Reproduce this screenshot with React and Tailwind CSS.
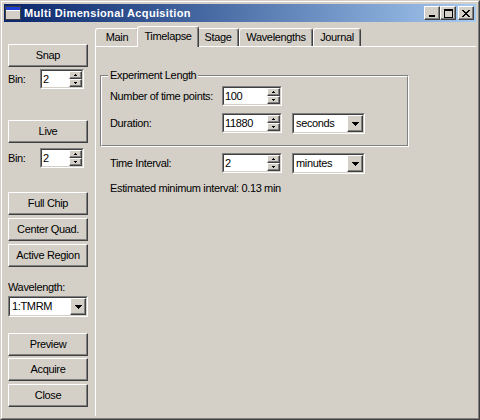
import React from "react";

const raised =
  "border border-t-white border-l-white border-r-[#404040] border-b-[#404040] shadow-[inset_-1px_-1px_0_#808080] bg-[#d4d0c8]";

function SmallUp() {
  return (
    <svg width="3" height="2" viewBox="0 0 3 2" shapeRendering="crispEdges">
      <rect x="1" y="0" width="1" height="1" fill="#000" />
      <rect x="0" y="1" width="3" height="1" fill="#000" />
    </svg>
  );
}

function SmallDown() {
  return (
    <svg width="3" height="2" viewBox="0 0 3 2" shapeRendering="crispEdges">
      <rect x="0" y="0" width="3" height="1" fill="#000" />
      <rect x="1" y="1" width="1" height="1" fill="#000" />
    </svg>
  );
}

function DownArrow() {
  return (
    <svg width="7" height="4" viewBox="0 0 7 4" shapeRendering="crispEdges">
      <rect x="0" y="0" width="7" height="1" fill="#000" />
      <rect x="1" y="1" width="5" height="1" fill="#000" />
      <rect x="2" y="2" width="3" height="1" fill="#000" />
      <rect x="3" y="3" width="1" height="1" fill="#000" />
    </svg>
  );
}

function Spin({ value, w }) {
  return (
    <div className={`${w} h-[20px] border border-t-[#808080] border-l-[#808080] border-r-white border-b-white`}>
      <div className="h-full flex border border-t-[#404040] border-l-[#404040] border-r-[#d4d0c8] border-b-[#d4d0c8] bg-white">
        <div className="flex-1 pl-[1px] flex items-center">{value}</div>
        <div className="w-[13px] flex flex-col">
          <div className={`h-[8px] ${raised} flex items-center justify-center`}>
            <SmallUp />
          </div>
          <div className={`h-[8px] ${raised} flex items-center justify-center`}>
            <SmallDown />
          </div>
        </div>
      </div>
    </div>
  );
}

function Select({ value, w, extra }) {
  return (
    <div className={`${w} ${extra} h-[21px] border border-t-[#808080] border-l-[#808080] border-r-white border-b-white`}>
      <div className="h-full flex border border-t-[#404040] border-l-[#404040] border-r-[#d4d0c8] border-b-[#d4d0c8] bg-white">
        <div className="flex-1 pl-[2px] flex items-center">{value}</div>
        <div className={`w-[16px] ${raised} flex items-center justify-center`}>
          <DownArrow />
        </div>
      </div>
    </div>
  );
}

function Btn({ children, extra }) {
  return (
    <div className={`h-[23px] ${raised} ${extra} flex items-center justify-center`}>
      {children}
    </div>
  );
}

function CloseIcon() {
  const rects = [];
  for (let i = 0; i < 7; i++) {
    rects.push(<rect key={"a" + i} x={i} y={i} width="2" height="1" fill="#000" />);
    rects.push(<rect key={"b" + i} x={6 - i} y={i} width="2" height="1" fill="#000" />);
  }
  return (
    <svg width="8" height="7" viewBox="0 0 8 7" shapeRendering="crispEdges">
      {rects}
    </svg>
  );
}

function TitleBar() {
  return (
    <div className="h-[18px] shrink-0 flex items-center bg-linear-to-r from-[#0a246a] to-[#a6caf0] pl-[1px] pr-[2px]">
      <svg width="16" height="14" viewBox="0 0 16 14" shapeRendering="crispEdges">
        <rect x="0" y="0" width="16" height="14" fill="#404040" />
        <rect x="1" y="1" width="14" height="12" fill="#d4d0c8" />
        <rect x="1" y="1" width="14" height="3" fill="#1c3fd8" />
        <rect x="1" y="4" width="14" height="1" fill="#ffffff" />
      </svg>
      <span className="ml-[3px] font-bold text-white tracking-[0.35px]">Multi Dimensional Acquisition</span>
      <div className="ml-auto flex items-center">
        <div className={`w-[16px] h-[14px] ${raised} flex items-end justify-center pb-[2px]`}>
          <svg width="6" height="2" viewBox="0 0 6 2" shapeRendering="crispEdges">
            <rect x="0" y="0" width="6" height="2" fill="#000" />
          </svg>
        </div>
        <div className={`w-[16px] h-[14px] ${raised} flex items-center justify-center`}>
          <svg width="9" height="9" viewBox="0 0 9 9" shapeRendering="crispEdges">
            <rect x="0" y="0" width="9" height="2" fill="#000" />
            <rect x="0" y="0" width="1" height="9" fill="#000" />
            <rect x="8" y="0" width="1" height="9" fill="#000" />
            <rect x="0" y="8" width="9" height="1" fill="#000" />
          </svg>
        </div>
        <div className={`ml-[2px] w-[16px] h-[14px] ${raised} flex items-center justify-center`}>
          <CloseIcon />
        </div>
      </div>
    </div>
  );
}

function LeftCol() {
  return (
    <div className="w-[80px] shrink-0 ml-[4px] pt-[22px] flex flex-col">
      <Btn>Snap</Btn>
      <div className="mt-[2px] h-[20px] flex items-center">
        <span className="w-[32px]">Bin:</span>
        <Spin value="2" w="w-[44px]" />
      </div>
      <Btn extra="mt-[31px]">Live</Btn>
      <div className="mt-[5px] h-[20px] flex items-center">
        <span className="w-[32px]">Bin:</span>
        <Spin value="2" w="w-[44px]" />
      </div>
      <Btn extra="mt-[24px]">Full Chip</Btn>
      <Btn extra="mt-[3px]">Center Quad.</Btn>
      <Btn extra="mt-[3px]">Active Region</Btn>
      <div className="mt-[14px] leading-[13px] h-[13px]">Wavelength:</div>
      <Select value="1:TMRM" w="w-[80px]" extra="mt-[2px]" />
      <Btn extra="mt-[16px]">Preview</Btn>
      <Btn extra="mt-[2px]">Acquire</Btn>
      <Btn extra="mt-[3px]">Close</Btn>
    </div>
  );
}

const tabBase =
  "border-t border-l border-r border-t-white border-l-white border-r-[#404040] rounded-t-[3px] shadow-[inset_-1px_0_0_#808080] bg-[#d4d0c8] flex items-center justify-center";

function RightCol() {
  return (
    <div className="ml-[7px] w-[400px] shrink-0 flex flex-col">
      <div className="h-[24px] shrink-0 flex items-end">
        <div className={`w-[44px] h-[18px] ${tabBase}`}>Main</div>
        <div className={`w-[62px] h-[21px] -mx-[2px] -mb-px relative z-10 pb-[2px] ${tabBase}`}>Timelapse</div>
        <div className={`w-[42px] h-[18px] ${tabBase}`}>Stage</div>
        <div className={`w-[74px] h-[18px] ${tabBase}`}>Wavelengths</div>
        <div className={`w-[48px] h-[18px] ${tabBase}`}>Journal</div>
      </div>
      <div className="flex-1 border-t border-l border-white">
        <div className="relative ml-[4px] mt-[28px] w-[309px] border border-t-[#808080] border-l-[#808080] border-r-white border-b-white">
          <div className="border border-t-white border-l-white border-r-[#808080] border-b-[#808080] pl-[8px] pt-[9px] pb-[11px]">
            <div className="h-[21px] flex items-start">
              <span className="w-[112px] h-[20px] flex items-center">Number of time points:</span>
              <Spin value="100" w="w-[60px]" />
            </div>
            <div className="mt-[6px] h-[21px] flex items-start">
              <span className="w-[112px] h-[20px] flex items-center">Duration:</span>
              <Spin value="11880" w="w-[60px]" />
              <Select value="seconds" w="w-[73px]" extra="ml-[10px]" />
            </div>
          </div>
          <span className="absolute left-[7px] top-[-7px] px-[2px] bg-[#d4d0c8] leading-[13px]">Experiment Length</span>
        </div>
        <div className="mt-[6px] pl-[14px] h-[21px] flex items-start">
          <span className="w-[112px] h-[20px] flex items-center">Time Interval:</span>
          <Spin value="2" w="w-[60px]" />
          <Select value="minutes" w="w-[73px]" extra="ml-[10px]" />
        </div>
        <div className="mt-[8px] pl-[14px] leading-[13px]">Estimated minimum interval: 0.13 min</div>
      </div>
    </div>
  );
}

export default function App() {
  return (
    <div className="w-[480px] h-[420px] overflow-hidden bg-[#d4d0c8] border border-t-[#d4d0c8] border-l-[#d4d0c8] border-r-[#404040] border-b-[#404040] font-['Liberation_Sans',Arial,sans-serif] text-[11px] text-black tracking-[-0.35px]">
      <div className="h-full border border-t-white border-l-white border-r-[#808080] border-b-[#808080] p-[2px] flex flex-col">
        <TitleBar />
        <div className="flex flex-1 overflow-hidden">
          <LeftCol />
          <RightCol />
        </div>
      </div>
    </div>
  );
}
